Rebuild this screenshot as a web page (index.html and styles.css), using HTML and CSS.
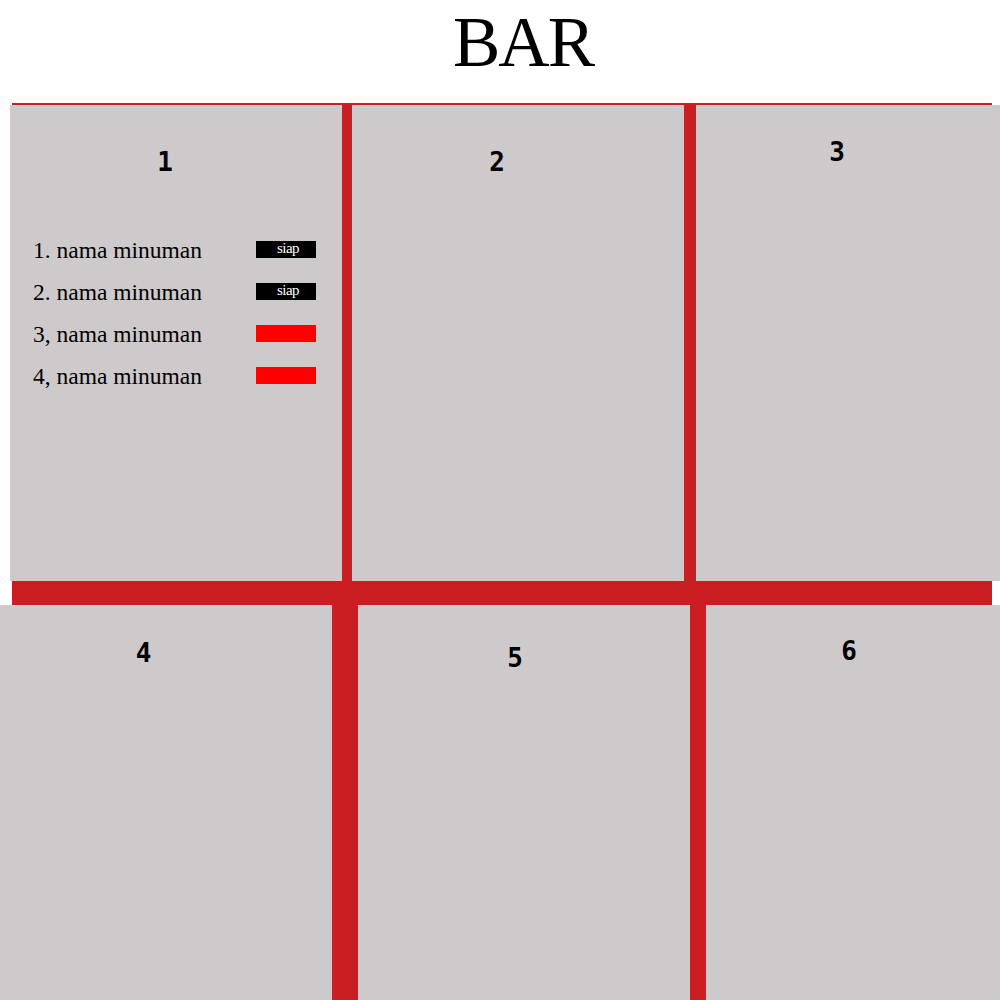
FILE: index.html
```html
<!DOCTYPE html>
<html>
<head>
<meta http-equiv="Content-Type" content="text/html; charset=utf-8"/>
<title>BAR</title>
<link rel="stylesheet" href="styles.css">
</head>
<body>

<header class="top">
  <h1 class="title">BAR</h1>
</header>

<main class="floor">
  <div class="row row-top">
    <section class="table table-1">
      <h2 class="table-no">1</h2>
      <ul class="orders">
        <li class="order"><span class="order-name">1. nama minuman</span><span class="status status-ready">siap</span></li>
        <li class="order"><span class="order-name">2. nama minuman</span><span class="status status-ready">siap</span></li>
        <li class="order"><span class="order-name">3, nama minuman</span><span class="status status-wait"></span></li>
        <li class="order"><span class="order-name">4, nama minuman</span><span class="status status-wait"></span></li>
      </ul>
    </section>
    <section class="table table-2">
      <h2 class="table-no">2</h2>
    </section>
    <section class="table table-3">
      <h2 class="table-no">3</h2>
    </section>
  </div>

  <div class="row row-bottom">
    <section class="table table-4">
      <h2 class="table-no">4</h2>
    </section>
    <section class="table table-5">
      <h2 class="table-no">5</h2>
    </section>
    <section class="table table-6">
      <h2 class="table-no">6</h2>
    </section>
  </div>
</main>

</body>
</html>
```

FILE: styles.css
```css
body {
  margin: 0;
  background-color: white;
  font-family: "Liberation Serif", "Times New Roman", serif;
  color: black;
}

/* header */
.top {
  height: 103px;
  padding-left: 46px;
  text-align: center;
}

.title {
  margin: 0;
  padding-top: 2px;
  font-size: 71px;
  font-weight: normal;
  line-height: 80px;
  letter-spacing: -2px;
}

/* the floor plan */
.floor {
  margin: 0 8px 0 12px;
  padding-top: 2px;
  background-color: #ca1e23;
}

.row {
  display: flex;
}

.row-top {
  margin: 0 -8px 0 -2px;
  padding-bottom: 24px;
}

.row-bottom {
  margin: 0 -8px 0 -12px;
  background-color: #ca1e23;
}

.table {
  flex: none;
  height: 476px;
  background-color: #cecacb;
}

.row-bottom .table {
  height: 395px;
}

.table-1, .table-2, .table-4, .table-5 { width: 332px; }
.table-3 { width: 304px; }
.table-6 { width: 294px; }

.table-2 { margin-left: 10px; }
.table-3 { margin-left: 12px; }
.table-5 { margin-left: 26px; }
.table-6 { margin-left: 16px; }

.table-no {
  margin: 0;
  font-family: "DejaVu Sans Mono", monospace;
  font-size: 26px;
  font-weight: bold;
  line-height: 26px;
  text-align: center;
}

.table-1 .table-no { padding: 44px 22px 0 0; }
.table-2 .table-no { padding: 44px 42px 0 0; }
.table-3 .table-no { padding: 34px 22px 0 0; }
.table-4 .table-no { padding: 35px 45px 0 0; }
.table-5 .table-no { padding: 40px 18px 0 0; }
.table-6 .table-no { padding: 33px 8px 0 0; }

/* orders list */
.orders {
  list-style: none;
  margin: 54px 0 0;
  padding: 0 0 0 23px;
}

.order {
  display: grid;
  grid-template-columns: 223px 60px;
  height: 42px;
  font-size: 23.5px;
  line-height: 42px;
}

.status {
  margin-top: 12px;
  height: 17px;
  padding-left: 4px;
  box-sizing: border-box;
  font-size: 15px;
  line-height: 15px;
  letter-spacing: -0.5px;
  text-align: center;
  color: white;
}

.status-ready {
  background-color: black;
}

.status-wait {
  background-color: red;
}
```
